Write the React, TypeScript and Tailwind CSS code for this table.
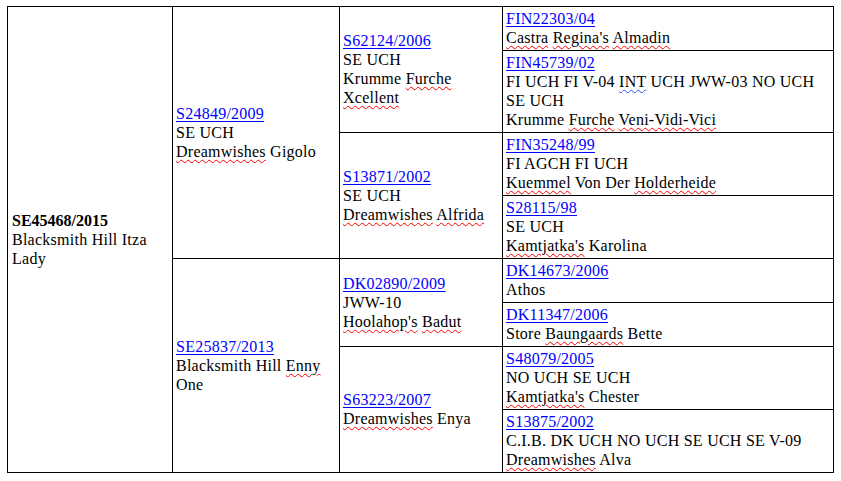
import React from 'react';

// spell-check squiggle like Word shows
const W = ({ children, blue }: { children: React.ReactNode; blue?: boolean }) => (
  <span
    className={
      'underline decoration-wavy decoration-1 underline-offset-[2px] ' +
      (blue ? 'decoration-[#3050ff]' : 'decoration-[#ff0000]')
    }
  >
    {children}
  </span>
);

const Reg = ({ id }: { id: string }) => (
  <div>
    <a href="#" className="text-[#0000ff] underline decoration-1 underline-offset-[2px]">
      {id}
    </a>
  </div>
);

const Cell = ({ span, first, children }: { span?: string; first?: boolean; children: React.ReactNode }) => (
  <div
    className={
      'border-l border-t border-black pt-[2px] pb-[3px] pr-[3px] ' +
      (first ? 'pl-[4px] ' : 'pl-[3px] ') +
      (span ?? '')
    }
  >
    {children}
  </div>
);

const Mid = ({ span, first, children }: { span: string; first?: boolean; children: React.ReactNode }) => (
  <Cell span={span + ' flex flex-col justify-center'} first={first}>
    <div>{children}</div>
  </Cell>
);

export default function App() {
  return (
    <div className="bg-white w-[841px] h-[481px] pt-[6px] pl-[7px]">
      <div
        className="grid grid-cols-[165px_167px_163px_331px] w-[827px] border-r border-b border-black text-black text-[16px] leading-[19px] tracking-[0.25px]"
        style={{ fontFamily: '"Liberation Serif", "Times New Roman", serif' }}
      >
        <Mid span="row-span-8" first>
          <div className="font-bold tracking-normal">SE45468/2015</div>
          <div>Blacksmith Hill Itza Lady</div>
        </Mid>

        <Mid span="row-span-4">
          <Reg id="S24849/2009" />
          <div>SE UCH</div>
          <div>
            <W>Dreamwishes</W> Gigolo
          </div>
        </Mid>

        <Mid span="row-span-2">
          <Reg id="S62124/2006" />
          <div>SE UCH</div>
          <div>
            Krumme <W>Furche</W> <W>Xcellent</W>
          </div>
        </Mid>

        <Cell>
          <Reg id="FIN22303/04" />
          <div>
            <W>Castra</W> <W>Regina's</W> <W>Almadin</W>
          </div>
        </Cell>

        <Cell>
          <Reg id="FIN45739/02" />
          <div>
            FI UCH FI V-04 <W blue>INT</W> UCH JWW-03 NO UCH SE UCH
          </div>
          <div>
            Krumme <W>Furche</W> <W>Veni-Vidi-Vici</W>
          </div>
        </Cell>

        <Mid span="row-span-2">
          <Reg id="S13871/2002" />
          <div>SE UCH</div>
          <div>
            <W>Dreamwishes</W> <W>Alfrida</W>
          </div>
        </Mid>

        <Cell>
          <Reg id="FIN35248/99" />
          <div>FI AGCH FI UCH</div>
          <div>
            <W>Kuemmel</W> Von Der <W>Holderheide</W>
          </div>
        </Cell>

        <Cell>
          <Reg id="S28115/98" />
          <div>SE UCH</div>
          <div>
            <W>Kamtjatka's</W> Karolina
          </div>
        </Cell>

        <Mid span="row-span-4">
          <Reg id="SE25837/2013" />
          <div>
            Blacksmith Hill <W>Enny</W> One
          </div>
        </Mid>

        <Mid span="row-span-2">
          <Reg id="DK02890/2009" />
          <div>JWW-10</div>
          <div>
            <W>Hoolahop's</W> <W>Badut</W>
          </div>
        </Mid>

        <Cell>
          <Reg id="DK14673/2006" />
          <div>Athos</div>
        </Cell>

        <Cell>
          <Reg id="DK11347/2006" />
          <div>
            Store <W>Baungaards</W> Bette
          </div>
        </Cell>

        <Mid span="row-span-2">
          <Reg id="S63223/2007" />
          <div>
            <W>Dreamwishes</W> Enya
          </div>
        </Mid>

        <Cell>
          <Reg id="S48079/2005" />
          <div>NO UCH SE UCH</div>
          <div>
            <W>Kamtjatka's</W> Chester
          </div>
        </Cell>

        <Cell>
          <Reg id="S13875/2002" />
          <div>C.I.B. DK UCH NO UCH SE UCH SE V-09</div>
          <div>
            <W>Dreamwishes</W> Alva
          </div>
        </Cell>
      </div>
    </div>
  );
}
